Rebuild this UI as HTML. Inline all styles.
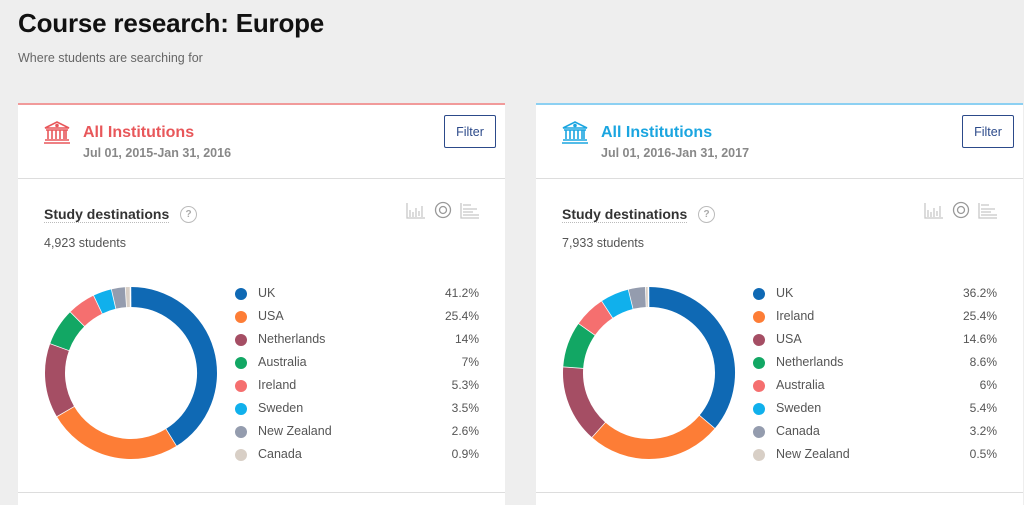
<!DOCTYPE html>
<html><head><meta charset="utf-8"><style>
body{margin:0;width:1024px;height:500px;background:#eeeeee;font-family:"Liberation Sans",sans-serif;position:relative;overflow:hidden;color:#333}
h1{position:absolute;left:18px;top:8px;margin:0;font-size:26px;font-weight:bold;color:#111;letter-spacing:-0.2px}
.sub{position:absolute;left:18px;top:51px;font-size:12.5px;color:#666}
.card{position:absolute;top:103px;width:487px;height:400px;background:#fff;border-top:2px solid}
.hd{height:73px;border-bottom:1px solid #ddd;position:relative}
.ttl{position:absolute;left:65px;top:19px;font-size:16px;font-weight:bold}
.dt{position:absolute;left:65px;top:41px;font-size:12.5px;font-weight:bold;color:#888}
.flt{position:absolute;right:9px;top:10px;width:52px;height:33px;border:1px solid #2c4a8a;border-radius:2px;font-size:12.5px;color:#2c4a8a;text-align:center;line-height:32px;box-sizing:border-box}
.st{position:absolute;left:26px;top:101px;font-size:14px;font-weight:bold;color:#333;border-bottom:1px dotted #bbb}
.q{position:absolute;left:162px;top:101px;width:15px;height:15px;border:1px solid #bbb;border-radius:50%;font-size:10px;color:#aaa;text-align:center;line-height:15px;font-weight:bold}
.ns{position:absolute;left:26px;top:131px;font-size:12.5px;color:#555}
.leg{position:absolute;left:217px;top:180px;width:244px}
.row{height:23px;position:relative;font-size:12.5px;color:#555}
.dot{position:absolute;left:0;top:3px;width:12px;height:12px;border-radius:50%}
.lb{position:absolute;left:23px;top:1px}
.pc{position:absolute;right:0;top:1px;font-size:12px}
.bot{position:absolute;left:0;right:0;top:387px;border-top:1px solid #ddd}
svg.d{position:absolute;left:0;top:0}
.ic{position:absolute;top:96px;left:388px}
</style></head><body>
<h1>Course research: Europe</h1>
<div class="sub">Where students are searching for</div>
<div id="c1" class="card" style="left:18px;border-color:#f19a9a"></div>
<div id="c2" class="card" style="left:536px;border-color:#8cd0f2"></div>
<script>
function card(id,color,date,n,data){
 var C={b:'#0f69b4',o:'#fd7d36',m:'#a54e64',g:'#12a764',p:'#f56f6f',c:'#10b0ec',s:'#949cae',w:'#d8cfc6'};
 var el=document.getElementById(id);
 var h='<div class="hd"><svg style="position:absolute;left:25px;top:15px" width="28" height="24" viewBox="0 0 28 24" fill="none" stroke="'+color+'" stroke-width="1.6"><path d="M2 8 L14 2 L26 8 Z"/><circle cx="14" cy="5.5" r="1" fill="'+color+'"/><path d="M3 10h22M5 10v9M9 10v9M13 10v9M17 10v9M21 10v9M23 10v9M2 20h24M1 23h26"/></svg>'+
 '<div class="ttl" style="color:'+color+'">All Institutions</div><div class="dt">'+date+'</div><div class="flt">Filter</div></div>'+
 '<div class="st">Study destinations</div><div class="q">?</div><div class="ns">'+n+'</div>'+
 '<svg class="ic" width="76" height="20" viewBox="0 0 76 20" fill="none" stroke="#c8c8c8" stroke-width="1.3"><path d="M1 2v15h18M4 9v7M7 11v5M10 7v9M13 10v5M16 5v11"/><circle cx="37" cy="9" r="7.5" stroke="#999"/><circle cx="37" cy="9" r="3.5" stroke="#999"/><path d="M55 2v15h18M57 4h8M57 8h14M57 11h10M57 14h16"/></svg>'+
 '<svg class="d" width="240" height="400">';
 var cx=113,cy=268,r=76,a=-Math.PI/2;
 data.forEach(function(d){var sw=d[2]/100*2*Math.PI;var a2=a+sw;
  var x1=cx+r*Math.cos(a),y1=cy+r*Math.sin(a),x2=cx+r*Math.cos(a2),y2=cy+r*Math.sin(a2);
  h+='<path d="M'+x1+' '+y1+' A'+r+' '+r+' 0 '+(sw>Math.PI?1:0)+' 1 '+x2+' '+y2+'" stroke="'+C[d[0]]+'" stroke-width="20" fill="none"/>';
  h+='<line x1="'+(cx+65*Math.cos(a2))+'" y1="'+(cy+65*Math.sin(a2))+'" x2="'+(cx+87*Math.cos(a2))+'" y2="'+(cy+87*Math.sin(a2))+'" stroke="#fff" stroke-width="1.5"/>';
  a=a2;});
 h+='</svg><div class="leg">';
 data.forEach(function(d){h+='<div class="row"><div class="dot" style="background:'+C[d[0]]+'"></div><div class="lb">'+d[1]+'</div><div class="pc">'+d[2]+'%</div></div>';});
 h+='</div><div class="bot"></div>';
 el.innerHTML=h;
}
card('c1','#e8575a','Jul 01, 2015-Jan 31, 2016','4,923 students',[['b','UK',41.2],['o','USA',25.4],['m','Netherlands',14],['g','Australia',7],['p','Ireland',5.3],['c','Sweden',3.5],['s','New Zealand',2.6],['w','Canada',0.9]]);
card('c2','#1aa5e0','Jul 01, 2016-Jan 31, 2017','7,933 students',[['b','UK',36.2],['o','Ireland',25.4],['m','USA',14.6],['g','Netherlands',8.6],['p','Australia',6],['c','Sweden',5.4],['s','Canada',3.2],['w','New Zealand',0.5]]);
</script>
</body></html>
